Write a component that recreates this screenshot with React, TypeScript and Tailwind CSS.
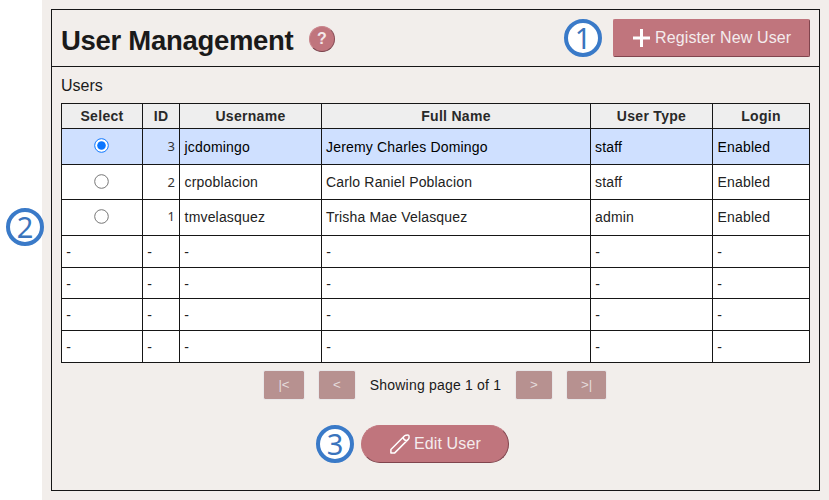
import type { ReactNode } from 'react';

const users = [
  { id: 3, username: 'jcdomingo', name: 'Jeremy Charles Domingo', type: 'staff', login: 'Enabled', selected: true },
  { id: 2, username: 'crpoblacion', name: 'Carlo Raniel Poblacion', type: 'staff', login: 'Enabled', selected: false },
  { id: 1, username: 'tmvelasquez', name: 'Trisha Mae Velasquez', type: 'admin', login: 'Enabled', selected: false },
];

const headings = ['Select', 'ID', 'Username', 'Full Name', 'User Type', 'Login'];

function Step({ children, className = '' }: { children: ReactNode; className?: string }) {
  return (
    <div
      className={`flex h-[38px] w-[38px] shrink-0 items-center justify-center rounded-full border-4 border-[#3a7ac8] bg-white pb-px font-['Noto_Sans',sans-serif] text-[29px] leading-none text-[#3a74bd] ${className}`}
    >
      <span>{children}</span>
    </div>
  );
}

function Cell({ children, selected = false, className = 'pt-px pl-1' }: { children: ReactNode; selected?: boolean; className?: string }) {
  return (
    <div className={`flex items-center tracking-[0.17px] ${selected ? 'bg-[#cfe0ff] text-black' : 'bg-white text-[#222]'} ${className}`}>
      {children}
    </div>
  );
}

function Radio({ checked }: { checked: boolean }) {
  return (
    <svg width="15" height="15" viewBox="0 0 15 15">
      <circle cx="7.5" cy="7.5" r="6.8" fill="#fff" stroke={checked ? '#0b76ff' : '#767676'} strokeWidth="1" />
      {checked && <circle cx="7.5" cy="7.5" r="4.3" fill="#0b76ff" />}
    </svg>
  );
}

function PageButton({ children, className }: { children: ReactNode; className: string }) {
  return (
    <button
      className={`box-content flex h-7 items-center justify-center rounded-[2px] border border-[#e9e7e8] bg-[#b79190] bg-clip-padding text-[13.3px] text-[#e5dcdc] ${className}`}
    >
      {children}
    </button>
  );
}

export default function App() {
  return (
    <div className="relative h-[500px] w-[829px] overflow-hidden bg-white pl-[42px] font-['Liberation_Sans',Arial,sans-serif] text-[#1a1a1a]">
      <div className="h-full bg-[#f2eeeb] pt-[9px] pl-[9px]">
        <main className="h-[482px] w-[769px] border border-[#161616]">
          <header className="flex h-[57px] items-center border-b border-[#161616] pr-[9px] pl-[9px]">
            <h1 className="w-[248px] pt-[5px] text-[27.5px] leading-8 font-bold tracking-[-0.3px] whitespace-nowrap">User Management</h1>
            <button className="mt-px flex h-[26px] w-[26px] items-center justify-center rounded-full border border-t-[#c9858c] border-r-[#884c55] border-b-[#774049] border-l-[#c9858c] bg-[#c0757d] text-[16px] font-bold text-[#f3e8ea]">
              ?
            </button>
            <Step className="ml-auto">1</Step>
            <button className="ml-[11px] flex h-[38px] w-[197px] items-center rounded-[2px] border border-t-[#c0757d] border-r-[#80444d] border-b-[#80444d] border-l-[#c0757d] bg-[#c0757d] pl-[19px] text-[16px] text-[#f4eced]">
              <svg width="17" height="18" viewBox="0 0 17 18" className="mr-[5px]">
                <path d="M8.5 0v18M0 9h17" stroke="#fff" strokeWidth="3" />
              </svg>
              <span className="tracking-[0.12px] whitespace-nowrap">Register New User</span>
            </button>
          </header>

          <section className="px-[9px]">
            <div className="h-9 pt-[7px] text-[16px] leading-6">Users</div>
            <div className="grid w-[749px] grid-cols-[80px_36px_141px_268px_121px_96px] grid-rows-[24px_35px_34px_35px_31px_30px_31px_31px] gap-px border border-[#161616] bg-[#161616] text-[14px]">
              {headings.map((h) => (
                <div key={h} className="flex items-center justify-center bg-[#eee] pt-px font-bold tracking-[0.3px] text-[#292929]">
                  {h}
                </div>
              ))}
              {users.map((u) => {
                const top = u.id === 1 ? 'pb-px' : 'pt-px';
                return (
                  <div key={u.id} className="contents">
                    <div className={`flex items-center justify-center pr-0.5 pb-[2px] ${u.selected ? 'bg-[#cfe0ff]' : 'bg-white'}`}>
                      <Radio checked={u.selected} />
                    </div>
                    <div
                      className={`flex items-center justify-end pr-1 font-['Noto_Sans',sans-serif] text-[13px] text-[#333] ${u.id === 1 ? 'pb-px' : 'pt-px'} ${u.selected ? 'bg-[#cfe0ff]' : 'bg-white'}`}
                    >
                      {u.id}
                    </div>
                    <Cell selected={u.selected} className={`pl-[4.6px] ${top}`}>{u.username}</Cell>
                    <Cell selected={u.selected} className={`pl-1 ${top}`}>{u.name}</Cell>
                    <Cell selected={u.selected} className={`pl-1 ${top}`}>{u.type}</Cell>
                    <Cell selected={u.selected} className={`pl-[4.6px] ${top}`}>{u.login}</Cell>
                  </div>
                );
              })}
              {Array.from({ length: 24 }, (_, i) => (
                <Cell key={i} className={i >= 6 && i < 18 ? 'pt-[2px] pl-[4.3px]' : 'pt-px pl-[4.3px]'}>-</Cell>
              ))}
            </div>
          </section>

          <nav className="mt-[7px] flex h-[30px] items-center pl-[211px]">
            <PageButton className="w-10">|&lt;</PageButton>
            <PageButton className="ml-[13px] w-9">&lt;</PageButton>
            <span className="w-[159px] text-center text-[14px] tracking-[0.2px] whitespace-nowrap">Showing page 1 of 1</span>
            <PageButton className="w-9">&gt;</PageButton>
            <PageButton className="ml-[13px] w-[39px]">&gt;|</PageButton>
          </nav>

          <div className="mt-6 flex items-center pl-[264px]">
            <Step>3</Step>
            <button className="mt-px ml-[7px] flex h-[38px] w-[148px] items-center rounded-full border border-t-[#c0757d] border-r-[#80444d] border-b-[#80444d] border-l-[#c0757d] bg-[#c0757d] pl-7 text-[16px] text-[#f4eced]">
              <svg width="20" height="20" viewBox="0 0 20 20" fill="none" stroke="#fff" strokeWidth="1.5" strokeLinejoin="round" className="mr-[4px]">
                <path d="M.9 19.1v-3.6L14.6 1.8c1-.9 2.3-.9 3.4-.9s1.1 1.3 1.1 2c0 .8-.2 1.8-.9 2.5L4.5 19.1zM13.2 3.2c.2 2 1.4 3.4 3.6 3.6" />
              </svg>
              <span className="tracking-[0.12px] whitespace-nowrap">Edit User</span>
            </button>
          </div>
        </main>
      </div>
      <Step className="absolute top-[208px] left-[6px]">2</Step>
    </div>
  );
}
